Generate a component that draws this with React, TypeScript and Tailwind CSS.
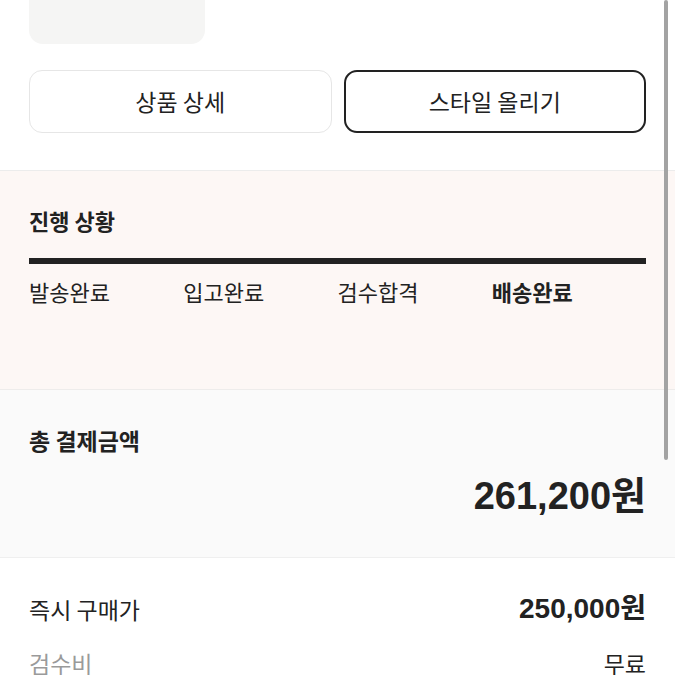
import React from "react";

const font = { fontFamily: '"Noto Sans CJK KR", "Noto Sans", sans-serif' };
const numFont = { fontFamily: '"Liberation Sans", "Noto Sans CJK KR", sans-serif' };

export default function App() {
  const steps = ["발송완료", "입고완료", "검수합격", "배송완료"];
  return (
    <div className="relative w-[675px] h-[675px] overflow-hidden bg-white text-[#222]" style={font}>
      {/* top: cropped thumbnail + buttons */}
      <div className="px-[29px] pb-[37px] border-b border-[#ececec]">
        <div className="w-[176px] h-[80px] -mt-[36px] rounded-[14px] bg-[#f5f5f4]" />
        <div className="mt-[26px] grid grid-cols-2 gap-[12px]">
          <button className="h-[63px] rounded-[13px] border border-[#e6e6e6] bg-white text-[23px] text-[#222]">
            상품 상세
          </button>
          <button className="h-[63px] rounded-[13px] border-2 border-[#222] bg-white text-[23px] text-[#222]">
            스타일 올리기
          </button>
        </div>
      </div>

      {/* progress */}
      <div className="h-[219px] bg-[#fdf7f5] border-b border-[#eeeceb] px-[29px] pt-[35px]">
        <div className="text-[22px] font-bold leading-[28px]">진행 상황</div>
        <div className="mt-[24px] h-[6px] bg-[#222]" />
        <div className="mt-[13px] grid grid-cols-4 text-[22px] leading-[28px]">
          {steps.map((s, i) => (
            <div key={s} className={i === 3 ? "font-bold" : ""}>
              {s}
            </div>
          ))}
        </div>
      </div>

      {/* total */}
      <div className="h-[168px] bg-[#fafafa] border-b border-[#efefef] px-[29px] pt-[36px]">
        <div className="text-[23px] font-semibold leading-[28px]">총 결제금액</div>
        <div className="mt-[22px] text-right text-[38px] font-bold leading-[40px]" style={numFont}>
          261,200원
        </div>
      </div>

      {/* details */}
      <div className="px-[29px] pt-[37px]">
        <div className="flex justify-between items-center leading-[28px]">
          <span className="text-[23px]">즉시 구매가</span>
          <span className="text-[28px] font-bold" style={numFont}>
            250,000원
          </span>
        </div>
        <div className="mt-[26px] flex justify-between items-center text-[23px] leading-[28px]">
          <span className="text-[#9a9a9a]">검수비</span>
          <span>무료</span>
        </div>
      </div>

      {/* scrollbar */}
      <div className="absolute top-0 left-[664px] w-[4px] h-[460px] rounded-full bg-[#a3a3a3]" />
    </div>
  );
}
